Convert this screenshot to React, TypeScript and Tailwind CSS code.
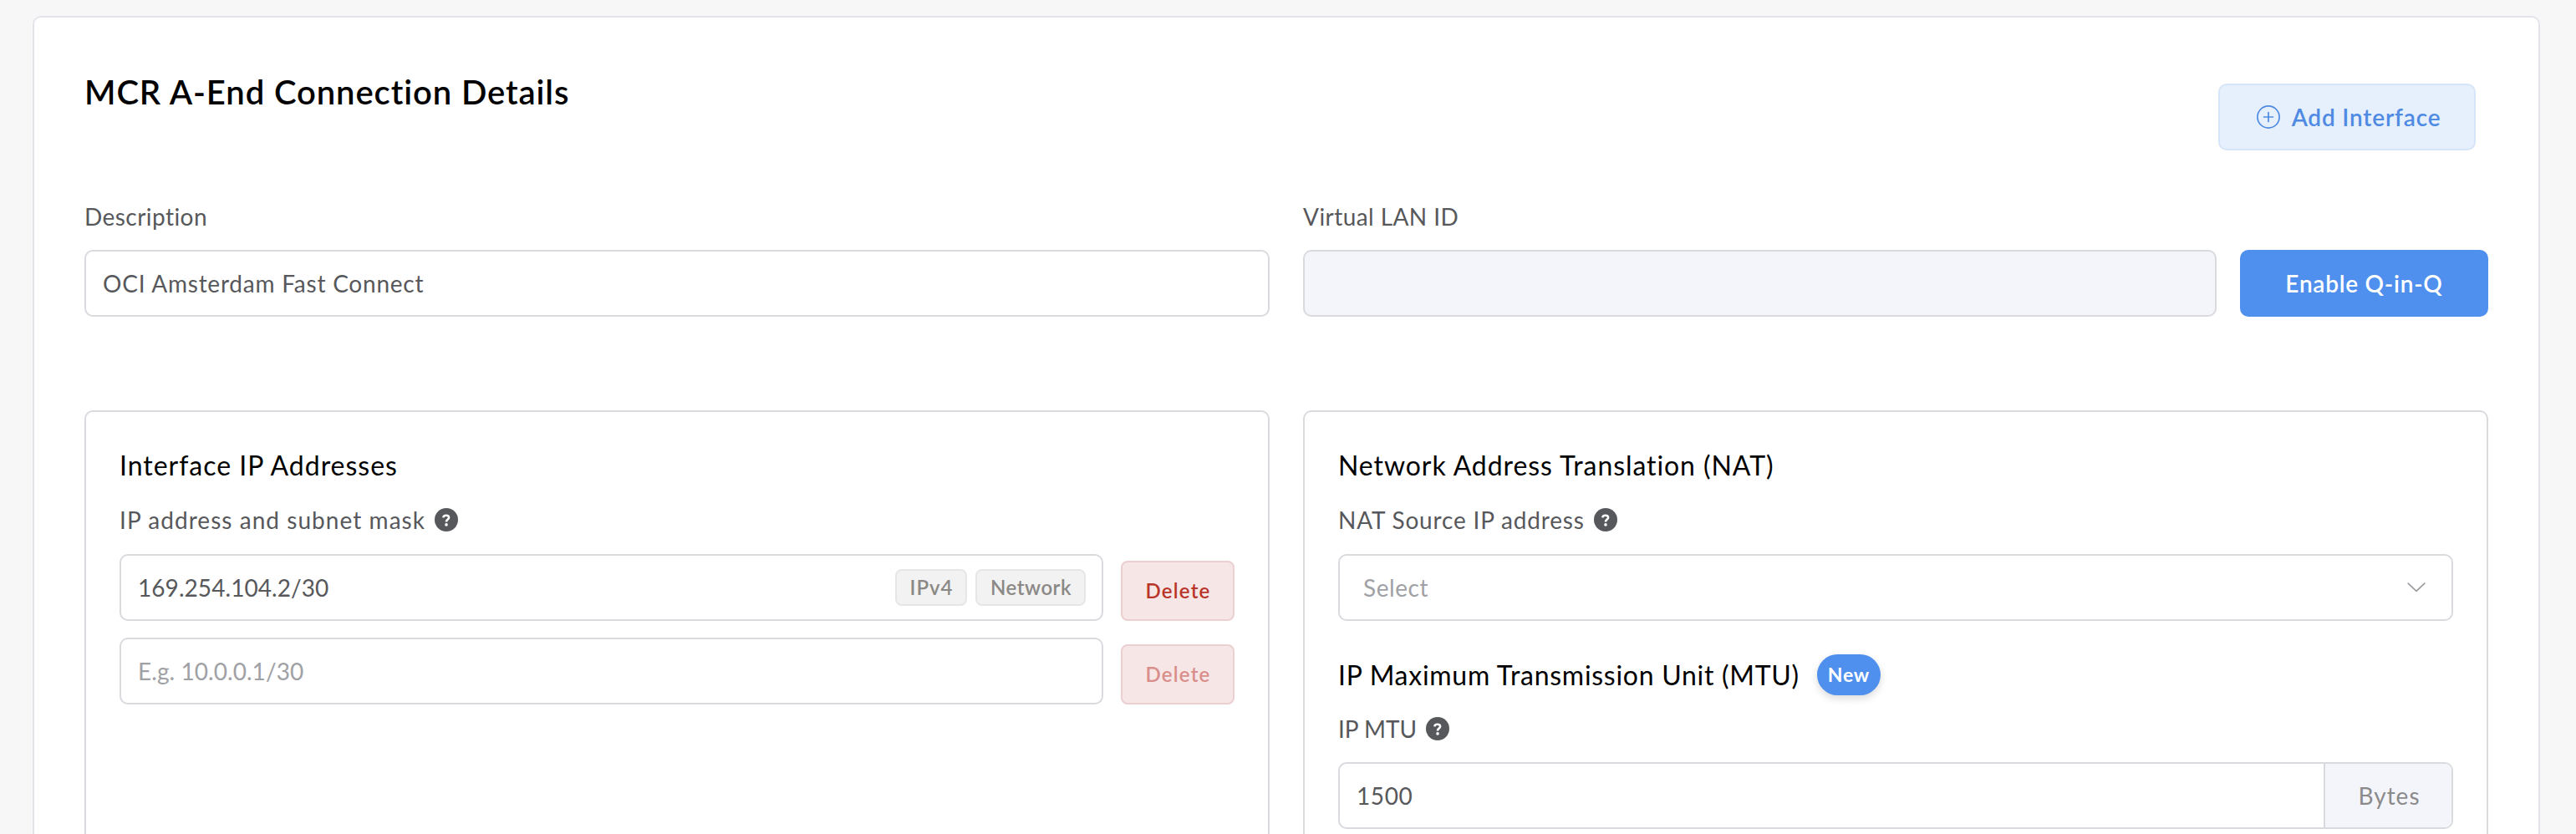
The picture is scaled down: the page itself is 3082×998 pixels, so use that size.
import type { ReactNode } from 'react';
import clsx from 'clsx';

const HelpIcon = () => (
	<svg className="w-7 h-7 shrink-0" viewBox="0 0 28 28" fill="none">
		<circle cx="14" cy="14" r="14" fill="#57585b" />
		<path d="M10.4 11.3C10.5 9.6 12 8.8 13.8 8.8C15.8 8.8 17.1 9.8 17.1 11.4C17.1 13.5 14 13.6 14 16.4" stroke="#fff" strokeWidth="2.6" />
		<circle cx="14" cy="19.9" r="1.8" fill="#fff" />
	</svg>
);

const PlusCircleIcon = () => (
	<svg className="w-7 h-7 shrink-0" viewBox="0 0 28 28" fill="none" stroke="currentColor" strokeWidth="1.7" strokeLinecap="round">
		<circle cx="14" cy="14" r="13.1" />
		<path d="M8.6 14H19.4M14 8.6V19.4" />
	</svg>
);

const ChevronIcon = () => (
	<svg className="w-[22px] h-3" viewBox="0 0 22 12" fill="none" stroke="#9a9b9f" strokeWidth="1.7" strokeLinecap="round">
		<path d="M1.2 1.1L11 10.4L20.8 1.1" />
	</svg>
);

interface FieldProps {
	children?: ReactNode;
	className?: string;
}

const Field = ({ children, className }: FieldProps) => (
	<div className={clsx('flex items-center h-20 border-2 border-[#d9dade] rounded-[10px] text-[28px]', className)}>
		{children}
	</div>
);

interface LabelProps {
	children: ReactNode;
	help?: boolean;
	className?: string;
}

const Label = ({ children, help, className }: LabelProps) => (
	<div className={clsx('flex items-center gap-[11px] h-10 text-[28px] text-[#57585b]', className)}>
		<span className="whitespace-nowrap">{children}</span>
		{help && <HelpIcon />}
	</div>
);

const Tag = ({ children, className }: FieldProps) => (
	<span
		className={clsx(
			'flex items-center justify-center h-11 bg-[#f2f2f2] border-2 border-[#e6e6e6] rounded-lg text-[24px] font-semibold text-[#8b8886]',
			className
		)}
	>
		{children}
	</span>
);

const DeleteButton = ({ disabled }: { disabled?: boolean }) => (
	<button
		disabled={disabled}
		className={clsx(
			'w-[136px] h-[72px] shrink-0 pl-px bg-[#f7e6e6] border-2 border-[#ecd0d1] rounded-lg text-[24px] font-semibold tracking-[1.2px]',
			disabled ? 'text-[#d98e8b]' : 'text-[#b93529]'
		)}
	>
		Delete
	</button>
);

const Panel = ({ children }: { children: ReactNode }) => (
	<section className="h-[560px] px-10 pt-10 border-2 border-[#d9dade] rounded-[10px]">{children}</section>
);

const App = () => {
	return (
		<div className="h-[998px] overflow-hidden bg-[#f7f7f7] pt-[19px] pl-[39px] font-['Lato',sans-serif]">
			<div className="w-[3000px] h-[1100px] px-[60px] pt-[65px] bg-white border-2 border-[#e3e4ea] rounded-[10px]">
				{/* Header */}
				<div className="flex items-start justify-between pr-[15px]">
					<h1 className="text-[40px] leading-[48px] font-semibold tracking-[0.9px] text-black">MCR A-End Connection Details</h1>
					<button className="flex items-center justify-center gap-[14px] w-[308px] h-20 mt-[14px] pl-1 bg-[#e6f0fc] border-2 border-[#d6e5f7] rounded-[10px] text-[28px] font-semibold tracking-[0.81px] text-[#4f8ae3]">
						<PlusCircleIcon />
						<span>Add Interface</span>
					</button>
				</div>

				{/* Description & VLAN */}
				<div className="grid grid-cols-2 gap-10 mt-[59px]">
					<div>
						<Label className="tracking-[0.45px]">Description</Label>
						<Field className="mt-5 px-5 text-[#57585b] tracking-[0.77px]">OCI Amsterdam Fast Connect</Field>
					</div>
					<div>
						<Label className="tracking-[0.43px]">Virtual LAN ID</Label>
						<div className="flex gap-7 mt-5">
							<Field className="flex-1 bg-[#f4f5fa]" />
							<button className="w-[297px] h-20 bg-[#4f8fee] rounded-[10px] text-[28px] font-semibold tracking-[0.75px] text-white">
								Enable Q-in-Q
							</button>
						</div>
					</div>
				</div>

				{/* Panels */}
				<div className="grid grid-cols-2 gap-10 mt-28">
					<Panel>
						<h2 className="text-[32px] leading-[48px] tracking-[0.98px] text-black">Interface IP Addresses</h2>
						<Label help className="mt-[21px] tracking-[1.05px]">
							IP address and subnet mask
						</Label>
						<div className="flex items-end gap-[21px] mt-[21px]">
							<Field className="flex-1 justify-between pl-5 pr-[19px] text-[#57585b] tracking-[0.06px]">
								<span>169.254.104.2/30</span>
								<div className="flex gap-[10px]">
									<Tag className="w-[86px] pl-px tracking-[0.96px]">IPv4</Tag>
									<Tag className="w-[132px] pl-px tracking-[0.52px]">Network</Tag>
								</div>
							</Field>
							<DeleteButton />
						</div>
						<div className="flex items-end gap-[21px] mt-5">
							<Field className="flex-1 pl-5 text-[#a0a1a5] tracking-[0.06px]">E.g. 10.0.0.1/30</Field>
							<DeleteButton disabled />
						</div>
					</Panel>

					<Panel>
						<h2 className="text-[32px] leading-[48px] tracking-[0.92px] text-black">
							Network Address Translation (NAT)
						</h2>
						<Label help className="mt-[21px] tracking-[0.82px]">
							NAT Source IP address
						</Label>
						<Field className="mt-[21px] pl-7 pr-[31px] justify-between text-[#a0a1a5] tracking-[0.57px]">
							<span>Select</span>
							<ChevronIcon />
						</Field>

						<div className="flex items-center gap-[21px] h-[49px] mt-10">
							<h2 className="text-[32px] leading-[48px] tracking-[0.72px] text-black">
								IP Maximum Transmission Unit (MTU)
							</h2>
							<span className="flex items-center justify-center w-[76px] h-[49px] bg-[#4f8fee] rounded-full shadow-[0_4px_10px_rgba(0,0,0,0.14)] text-[23px] font-bold tracking-[0.7px] text-white">
								New
							</span>
						</div>
						<Label help className="mt-5">
							IP MTU
						</Label>
						<Field className="mt-5 pl-5 justify-between overflow-hidden text-[#57585b] tracking-[0.59px]">
							<span>1500</span>
							<span className="flex items-center justify-center w-[153px] h-full pl-0.5 bg-[#f4f5fa] border-l-2 border-[#d9dade] text-[#8b8a8b] tracking-[1px]">
								Bytes
							</span>
						</Field>
					</Panel>
				</div>
			</div>
		</div>
	);
};

export default App;
